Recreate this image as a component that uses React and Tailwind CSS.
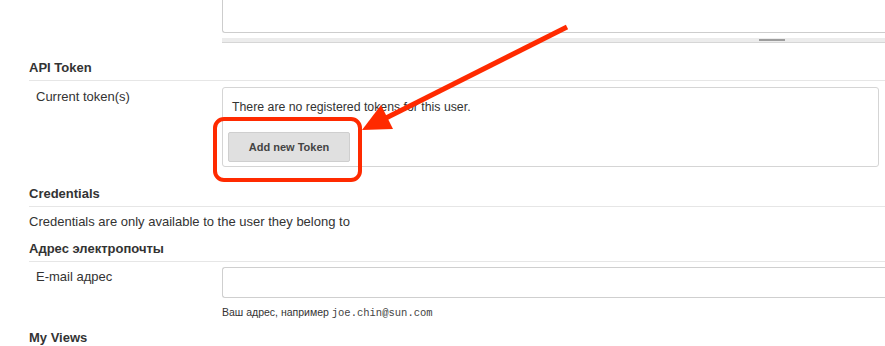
import React from 'react'

function SectionHeading({ children, className = '' }) {
  return (
    <h3 className={`font-bold text-[13px] leading-[16px] pb-[4px] border-b border-[#e6e6e6] ${className}`}>
      {children}
    </h3>
  )
}

function Annotation() {
  // Skitch-style arrow + highlight box drawn over the form
  return (
    <svg className="absolute left-0 top-0 pointer-events-none" width="885" height="346" viewBox="0 0 885 346">
      <rect x="215" y="119" width="145" height="61" rx="9" ry="9" fill="none" stroke="#ff2a00" strokeWidth="4" />
      <line x1="567" y1="27" x2="386" y2="118" stroke="#ff2a00" strokeWidth="5" />
      <polygon points="362,130 381,105 393,129" fill="#ff2a00" />
    </svg>
  )
}

export default function App() {
  return (
    <div className="relative w-[885px] h-[346px] overflow-hidden bg-white text-[#333] text-[13px] font-['Liberation_Sans',Arial,sans-serif]">
      <div className="pl-[29px]">
        {/* tail of the textarea above */}
        <div className="flex">
          <div className="w-[193px] shrink-0" />
          <div className="flex-1 h-[33px] border-l border-b border-[#cdcdcd] rounded-bl-[3px]" />
        </div>
        <div className="ml-[193px] mt-[5px] h-[5px] bg-[#ececec] border-b border-[#d6d6d6] pl-[537px] pt-[1px]">
          <div className="w-[26px] h-[2px] bg-[#9d9d9d]" />
        </div>

        {/* API Token */}
        <SectionHeading className="mt-[17px]">API Token</SectionHeading>
        <div className="mt-[6px] flex">
          <div className="w-[193px] shrink-0 pl-[7px] pt-[2px] leading-[16px]">Current token(s)</div>
          <div className="w-[657px] h-[80px] border border-[#d5d5d5] rounded-[3px] pt-[11px] pl-[5px]">
            <p className="pl-[4px] leading-[16px] text-[12.3px]">There are no registered tokens for this user.</p>
            <button className="mt-[17px] w-[122px] h-[30px] bg-[#e0e0e0] border border-[#cfcfcf] rounded-[2px] font-bold text-[11px] text-[#444]">
              Add new Token
            </button>
          </div>
        </div>

        {/* Credentials */}
        <SectionHeading className="mt-[19px]">Credentials</SectionHeading>
        <p className="mt-[7px] leading-[16px]">Credentials are only available to the user they belong to</p>

        {/* Email */}
        <SectionHeading className="mt-[11px]">Адрес электропочты</SectionHeading>
        <div className="mt-[5px] flex">
          <div className="w-[193px] shrink-0 pl-[7px] pt-[2px] leading-[16px]">E-mail адрес</div>
          <div className="flex-1">
            <div className="h-[31px] border border-[#cfcfcf] border-r-0 rounded-l-[3px]" />
            <p className="mt-[7px] text-[10.5px] leading-[14px]">
              Ваш адрес, например{' '}
              <span className="font-['Liberation_Mono','DejaVu_Sans_Mono',monospace] text-[10.5px] text-[#444]">joe.chin@sun.com</span>
            </p>
          </div>
        </div>

        {/* My Views */}
        <SectionHeading className="mt-[10px]">My Views</SectionHeading>
      </div>
      <Annotation />
    </div>
  )
}
